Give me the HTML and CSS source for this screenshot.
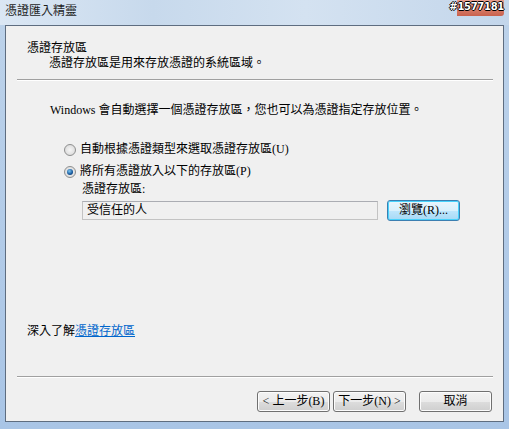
FILE: index.html
```html
<!DOCTYPE html>
<html lang="zh-Hant">
<head>
    <meta charset="UTF-8">
    <title>憑證匯入精靈</title>
    <link rel="stylesheet" href="styles.css">
</head>
<body>
    <div class="frame">
        <div class="titlebar">
            <span class="title">憑證匯入精靈</span>
            <span class="badge">#1577181</span>
        </div>

        <div class="wizard">
            <div class="wizard-header">
                <div class="header-title">憑證存放區</div>
                <div class="header-desc">憑證存放區是用來存放憑證的系統區域。</div>
            </div>
            <div class="separator"></div>

            <div class="wizard-body">
                <p class="intro">Windows 會自動選擇一個憑證存放區，您也可以為憑證指定存放位置。</p>

                <label class="radio-row">
                    <span class="radio"></span>
                    <span>自動根據憑證類型來選取憑證存放區(U)</span>
                </label>
                <label class="radio-row">
                    <span class="radio checked"></span>
                    <span>將所有憑證放入以下的存放區(P)</span>
                </label>

                <div class="store">
                    <div class="store-label">憑證存放區:</div>
                    <div class="store-row">
                        <div class="store-input">受信任的人</div>
                        <button class="btn btn-focus">瀏覽(R)...</button>
                    </div>
                </div>

                <div class="learn-more">深入了解<a href="#">憑證存放區</a></div>
            </div>

            <div class="separator"></div>
            <div class="wizard-footer">
                <button class="btn">&lt; 上一步(B)</button>
                <button class="btn">下一步(N) &gt;</button>
                <button class="btn btn-cancel">取消</button>
            </div>
        </div>
    </div>
</body>
</html>
```

FILE: styles.css
```css
body {
    margin: 0;
    font-family: 'Liberation Serif', 'Noto Sans CJK TC', serif;
    font-size: 12px;
    color: #000;
    background-color: #b9d1ea;
}

.frame {
    width: 509px;
    height: 429px;
    background: linear-gradient(to bottom, #d3e2f2 0px, #bcd2ea 25px, #a9c5e6 100%);
    position: relative;
    overflow: hidden;
}

.titlebar {
    height: 25px;
    display: flex;
    align-items: center;
    padding-left: 5px;
    background: linear-gradient(to right, #dbe7f4, #c7d9ec 30%, #d4e2f1 60%, #c3d6eb);
}

.title {
    font-size: 12px;
    line-height: 15px;
    color: #1e1e1e;
    margin-top: -2px;
}

/* watermark stamp over the title bar */
.badge {
    position: absolute;
    top: 0;
    right: 5px;
    height: 16px;
    padding-left: 2px;
    border-radius: 0 0 3px 3px;
    background: linear-gradient(to bottom, #e9a08f, #c9614d) right / 47px 100% no-repeat;
    color: #fff;
    font-family: 'DejaVu Sans', sans-serif;
    font-weight: bold;
    font-size: 10px;
    line-height: 14px;
    letter-spacing: -0.3px;
    text-shadow: 1px 0 0 #000, -1px 0 0 #000, 0 1px 0 #000, 0 -1px 0 #000;
}

.wizard {
    margin: 0 5px;
    height: 395px;
    border: 1px solid #5e6d80;
    background-color: #f0f0f0;
    display: flex;
    flex-direction: column;
}

.wizard-header {
    padding: 15px 0 0 21px;
    height: 38px;
}

.header-title {
    line-height: 15px;
}

.header-desc {
    line-height: 15px;
    padding-left: 22px;
}

.separator {
    height: 0;
    margin: 0 10px 0 11px;
    border-top: 1px solid #a0a0a0;
    border-bottom: 1px solid #fff;
}

.wizard-body {
    flex: 1;
    padding: 22px 0 0 44px;
    display: flex;
    flex-direction: column;
}

.intro {
    margin: 0 0 24px 0;
    line-height: 15px;
}

.radio-row {
    display: flex;
    align-items: center;
    gap: 4px;
    margin-left: 14px;
    height: 15px;
    line-height: 15px;
    margin-bottom: 7px;
}

.radio {
    width: 12px;
    height: 12px;
    border-radius: 50%;
    border: 1px solid #8e8f8f;
    background: radial-gradient(circle at 50% 50%, #f6f6f6, #d4d4d4);
    box-sizing: border-box;
    position: relative;
}

.radio.checked::after {
    content: '';
    position: absolute;
    left: 2px;
    top: 2px;
    width: 6px;
    height: 6px;
    border-radius: 50%;
    background: radial-gradient(circle at 40% 35%, #7cc6f2, #15569a 60%, #0b2c5a);
}

.store {
    margin-left: 32px;
    margin-top: -4px;
}

.store-label {
    line-height: 15px;
    margin-bottom: 3px;
}

.store-row {
    display: flex;
    align-items: center;
    gap: 9px;
}

.store-input {
    width: 290px;
    height: 17px;
    line-height: 17px;
    padding-left: 4px;
    border: 1px solid #c3c3c3;
    border-top-color: #abadb3;
    background-color: #f0f0f0;
}

.btn {
    font-family: 'Liberation Serif', 'Noto Sans CJK TC', serif;
    font-size: 12px;
    height: 21px;
    width: 73px;
    padding: 0;
    line-height: 17px;
    color: #000;
    border: 1px solid #707070;
    border-radius: 3px;
    background: linear-gradient(to bottom, #f2f2f2 0%, #ebebeb 50%, #dddddd 51%, #cfcfcf 100%);
    box-shadow: inset 0 0 0 1px #fcfcfc;
}

.btn-focus {
    border-color: #3c7fb1;
    background: linear-gradient(to bottom, #eaf6fd 0%, #d9f0fc 50%, #bee6fd 51%, #a7d9f5 100%);
    box-shadow: inset 0 0 0 1px #48d2fc;
}

.learn-more {
    margin-top: 103px;
    margin-left: -23px;
    line-height: 15px;
}

.learn-more a {
    color: #0066cc;
    text-decoration: underline;
}

.wizard-footer {
    height: 43px;
    display: flex;
    justify-content: flex-end;
    align-items: flex-start;
    padding: 13px 11px 0 0;
    box-sizing: border-box;
    gap: 3px;
}

.btn-cancel {
    margin-left: 10px;
}
```
